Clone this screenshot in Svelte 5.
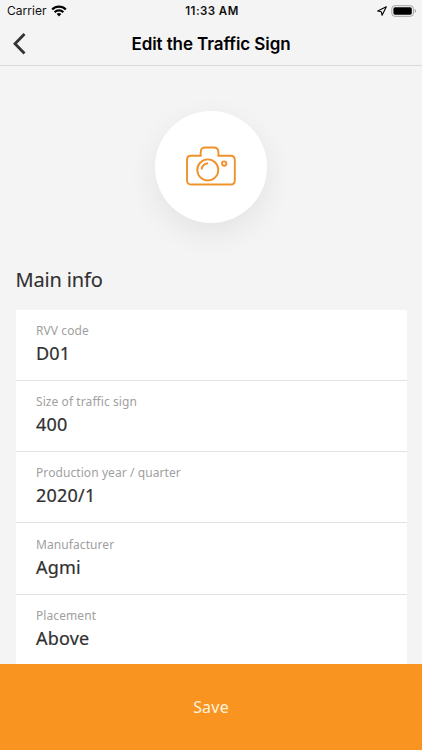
<script lang="ts">
  interface Field {
    label: string;
    value: string;
  }

  const fields: Field[] = [
    { label: "RVV code", value: "D01" },
    { label: "Size of traffic sign", value: "400" },
    { label: "Production year / quarter", value: "2020/1" },
    { label: "Manufacturer", value: "Agmi" },
    { label: "Placement", value: "Above" },
  ];
</script>

<div class="screen">
  <div class="status-bar">
    <div class="status-left">
      <span class="carrier">Carrier</span>
      <svg class="wifi" viewBox="0 0 16 12" width="16" height="12" fill="none" stroke="#000" stroke-width="2.3" aria-hidden="true">
        <path d="M1.2 4.5a9.7 9.7 0 0 1 13.6 0" />
        <path d="M3.7 7.2a6.1 6.1 0 0 1 8.6 0" />
        <path d="M8 11.4 5.7 9.1a3.3 3.3 0 0 1 4.6 0z" fill="#000" stroke="none" />
      </svg>
    </div>
    <span class="time">11:33 AM</span>
    <div class="status-right">
      <svg viewBox="0 0 10 10" width="10" height="10" fill="none" stroke="#000" stroke-width="1.1" stroke-linejoin="round" aria-hidden="true">
        <path d="M9.3.8.7 5l3.6.8.8 3.5z" />
      </svg>
      <svg viewBox="0 0 26 12" width="26" height="12" aria-hidden="true">
        <rect x=".8" y=".7" width="21.6" height="10.6" rx="3" fill="none" stroke="#a3a3a3" />
        <rect x="2.4" y="2.3" width="18.4" height="7.4" rx="1.6" />
        <path d="M23.7 4.1q1.4.6 1.4 1.9t-1.4 1.9z" fill="#a3a3a3" />
      </svg>
    </div>
  </div>

  <header class="nav-bar">
    <button class="back" aria-label="Back">
      <svg viewBox="0 0 14 22" width="14" height="22" fill="none" stroke="#333" stroke-width="2.8" aria-hidden="true">
        <path d="M12.5 1 3 10.7l9.5 9.7" />
      </svg>
    </button>
    <h1>Edit the Traffic Sign</h1>
  </header>

  <main class="content">
    <button class="photo" aria-label="Add photo">
      <svg viewBox="0 0 50 40" width="50" height="40" fill="none" stroke="#f0922b" stroke-width="1.9" aria-hidden="true">
        <path d="M5 9.7h9.7V6.2q0-4.7 4.7-4.7h8.3q4.7 0 4.7 4.7v3.5h12.1q4.3 0 4.3 4.3v20.2q0 4.3-4.3 4.3H5q-4 0-4-4.3V14q0-4.3 4-4.3z" />
        <circle cx="21.8" cy="23.9" r="10.5" />
        <path d="M15.7 23.5q.3-5.4 6.4-6.2" />
        <circle cx="38.2" cy="17.6" r="2.2" />
      </svg>
    </button>

    <h2>Main info</h2>

    <div class="fields">
      {#each fields as field}
        <div class="field">
          <span class="label">{field.label}</span>
          <span class="value">{field.value}</span>
        </div>
      {/each}
    </div>
  </main>

  <button class="save">Save</button>
</div>

<style>
  :global(body) {
    margin: 0;
  }

  .screen {
    display: flex;
    flex-direction: column;
    height: 750px;
    overflow: hidden;
    background: #f4f4f4;
    color: #303030;
    font-family: "Noto Sans", sans-serif;
  }

  button {
    padding: 0;
    border: 0;
    font-family: inherit;
    cursor: pointer;
  }

  svg {
    display: block;
  }

  .status-bar {
    display: grid;
    grid-template-columns: 1fr auto 1fr;
    align-items: center;
    flex: none;
    height: 22px;
    padding: 0 5px 0 7px;
    box-sizing: border-box;
    color: #111;
    font-family: Inter, sans-serif;
    font-size: 12px;
  }

  .status-left,
  .status-right {
    display: flex;
    align-items: center;
    gap: 4px;
  }

  .status-left {
    padding-bottom: 1px;
  }

  .status-right {
    justify-content: flex-end;
  }

  .carrier {
    letter-spacing: 0.05px;
  }

  .time {
    font-weight: 600;
    font-size: 11.5px;
    letter-spacing: 0.45px;
  }

  .nav-bar {
    display: grid;
    grid-template-columns: 40px 1fr 40px;
    align-items: center;
    flex: none;
    height: 44px;
    box-sizing: border-box;
    border-bottom: 1px solid #d9d9d9;
  }

  .back {
    justify-self: start;
    padding-left: 12px;
    background: none;
  }

  h1 {
    margin: 0;
    color: #000;
    font-family: Inter, sans-serif;
    font-size: 17px;
    font-weight: 600;
    letter-spacing: -0.08px;
    text-align: center;
  }

  .content {
    display: flex;
    flex-direction: column;
    flex: 1;
    min-height: 0;
    overflow: hidden;
    padding: 45px 15.5px 0;
  }

  .photo {
    display: flex;
    align-items: center;
    justify-content: center;
    align-self: center;
    flex: none;
    width: 112px;
    height: 112px;
    box-sizing: border-box;
    padding-bottom: 3px;
    border-radius: 50%;
    background: #fff;
    box-shadow: 0 10px 30px rgba(0, 0, 0, 0.07);
  }

  h2 {
    flex: none;
    margin: 43px 0 0;
    height: 43.6px;
    line-height: 28px;
    font-size: 20px;
    font-weight: 400;
    letter-spacing: -0.15px;
    -webkit-text-stroke: 0.1px;
  }

  .fields {
    flex: none;
    background: #fff;
  }

  .field {
    display: flex;
    flex-direction: column;
    height: 71.25px;
    box-sizing: border-box;
    padding: 12.4px 20.5px 0;
    border-bottom: 1px solid #e2e2e2;
  }

  .label {
    color: #a0a0a0;
    font-size: 12px;
    line-height: 17px;
    letter-spacing: 0.08px;
  }

  .value {
    font-size: 18px;
    font-weight: 400;
    line-height: 29px;
    letter-spacing: 0.2px;
    -webkit-text-stroke: 0.2px;
  }

  .save {
    flex: none;
    height: 86px;
    background: #f99420;
    color: #fff3df;
    font-size: 16px;
    letter-spacing: 0.2px;
  }
</style>
